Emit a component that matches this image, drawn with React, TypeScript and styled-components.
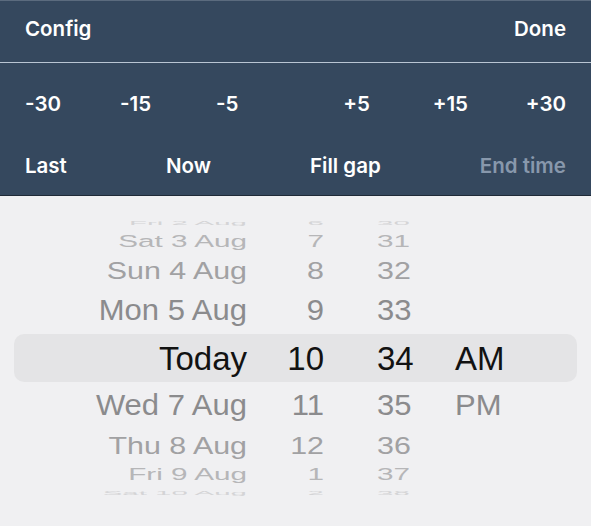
import React from "react";
import styled, { createGlobalStyle } from "styled-components";

const GlobalStyle = createGlobalStyle`
  html, body {
    margin: 0;
    padding: 0;
    background: #f0f0f2;
  }
  #root {
    min-height: 100vh;
  }
`;

const Page = styled.div`
  width: 591px;
  min-height: 526px;
  background: #f0f0f2;
  display: flex;
  flex-direction: column;
`;

const Header = styled.header`
  background: #35485e;
  border-top: 1px solid #5b6b7e;
  border-bottom: 1px solid #1f2a37;
  padding-bottom: 7px;
  font-family: Inter, "Noto Sans", sans-serif;
  font-weight: 600;
  font-size: 20.5px;
  color: #ffffff;
`;

const TopBar = styled.div`
  height: 56px;
  padding: 0 25px;
  display: flex;
  align-items: center;
  justify-content: space-between;
`;

const Divider = styled.hr`
  margin: 5px 0 0;
  border: 0;
  height: 1px;
  background: #b9c5d3;
`;

const OffsetRow = styled.div`
  height: 82px;
  padding: 0 25px;
  display: flex;
  align-items: center;
  justify-content: space-between;
`;

const OffsetGroup = styled.div<{ $cols: string; $align: "start" | "end" }>`
  display: grid;
  grid-template-columns: ${(p) => p.$cols};
  justify-items: ${(p) => p.$align};
`;

const ActionRow = styled.div`
  height: 43px;
  padding: 0 25px;
  display: flex;
  align-items: center;
  justify-content: space-between;
`;

const HeaderButton = styled.span<{ $dim?: boolean }>`
  color: ${(p) => (p.$dim ? "#8898ac" : "#ffffff")};
  line-height: 1;
  white-space: nowrap;
`;

const Picker = styled.div`
  padding-top: 21px;
  display: flex;
  flex-direction: column;
  font-family: "Liberation Sans", Arial, sans-serif;
`;

type Level = 0 | 1 | 2 | 3 | 4;

const levels: Record<Level, { h: number; size: number; scale: number; color: string }> = {
  0: { h: 48, size: 33, scale: 1, color: "#121212" },
  1: { h: 47, size: 31, scale: 0.93, color: "#8b8b8d" },
  2: { h: 33, size: 30.4, scale: 0.78, color: "#a1a1a3" },
  3: { h: 25, size: 29.7, scale: 0.53, color: "#b6b6b8" },
  4: { h: 12, size: 29.5, scale: 0.2, color: "#d4d4d6" },
};

const WheelRow = styled.div<{ $level: Level }>`
  margin: 0 14px;
  height: ${(p) => levels[p.$level].h}px;
  display: grid;
  grid-template-columns: 233px 130px 78px 1fr;
  grid-template-rows: ${(p) => levels[p.$level].h}px;
  align-items: center;
  overflow: hidden;
  border-radius: ${(p) => (p.$level === 0 ? "10px" : "0")};
  background: ${(p) => (p.$level === 0 ? "#e4e4e6" : "transparent")};
  color: ${(p) => levels[p.$level].color};
  font-size: ${(p) => levels[p.$level].size}px;
`;

const Cell = styled.span<{ $level: Level; $align: "start" | "end"; $padRight?: number }>`
  justify-self: ${(p) => p.$align};
  padding-right: ${(p) => p.$padRight ?? 0}px;
  line-height: 1;
  white-space: nowrap;
  transform: scaleY(${(p) => levels[p.$level].scale});
`;

type Row = { date: string; hour: string; minute: string; ampm: string; level: Level };

const rows: Row[] = [
  { date: "Fri 2 Aug", hour: "6", minute: "30", ampm: "", level: 4 },
  { date: "Sat 3 Aug", hour: "7", minute: "31", ampm: "", level: 3 },
  { date: "Sun 4 Aug", hour: "8", minute: "32", ampm: "", level: 2 },
  { date: "Mon 5 Aug", hour: "9", minute: "33", ampm: "", level: 1 },
  { date: "Today", hour: "10", minute: "34", ampm: "AM", level: 0 },
  { date: "Wed 7 Aug", hour: "11", minute: "35", ampm: "PM", level: 1 },
  { date: "Thu 8 Aug", hour: "12", minute: "36", ampm: "", level: 2 },
  { date: "Fri 9 Aug", hour: "1", minute: "37", ampm: "", level: 3 },
  { date: "Sat 10 Aug", hour: "2", minute: "38", ampm: "", level: 4 },
];

export default function App() {
  return (
    <>
      <GlobalStyle />
      <Page>
        <Header>
          <TopBar>
            <HeaderButton>Config</HeaderButton>
            <HeaderButton>Done</HeaderButton>
          </TopBar>
          <Divider />
          <OffsetRow>
            <OffsetGroup $cols="95px 96px auto" $align="start">
              <HeaderButton>-30</HeaderButton>
              <HeaderButton>-15</HeaderButton>
              <HeaderButton>-5</HeaderButton>
            </OffsetGroup>
            <OffsetGroup $cols="auto 98px 98px" $align="end">
              <HeaderButton>+5</HeaderButton>
              <HeaderButton>+15</HeaderButton>
              <HeaderButton>+30</HeaderButton>
            </OffsetGroup>
          </OffsetRow>
          <ActionRow>
            <HeaderButton>Last</HeaderButton>
            <HeaderButton>Now</HeaderButton>
            <HeaderButton>Fill gap</HeaderButton>
            <HeaderButton $dim>End time</HeaderButton>
          </ActionRow>
        </Header>
        <Picker>
          {rows.map((r) => (
            <WheelRow key={r.date} $level={r.level}>
              <Cell $level={r.level} $align="end">{r.date}</Cell>
              <Cell $level={r.level} $align="end" $padRight={53}>{r.hour}</Cell>
              <Cell $level={r.level} $align="start">{r.minute}</Cell>
              <Cell $level={r.level} $align="start">{r.ampm}</Cell>
            </WheelRow>
          ))}
        </Picker>
      </Page>
    </>
  );
}
